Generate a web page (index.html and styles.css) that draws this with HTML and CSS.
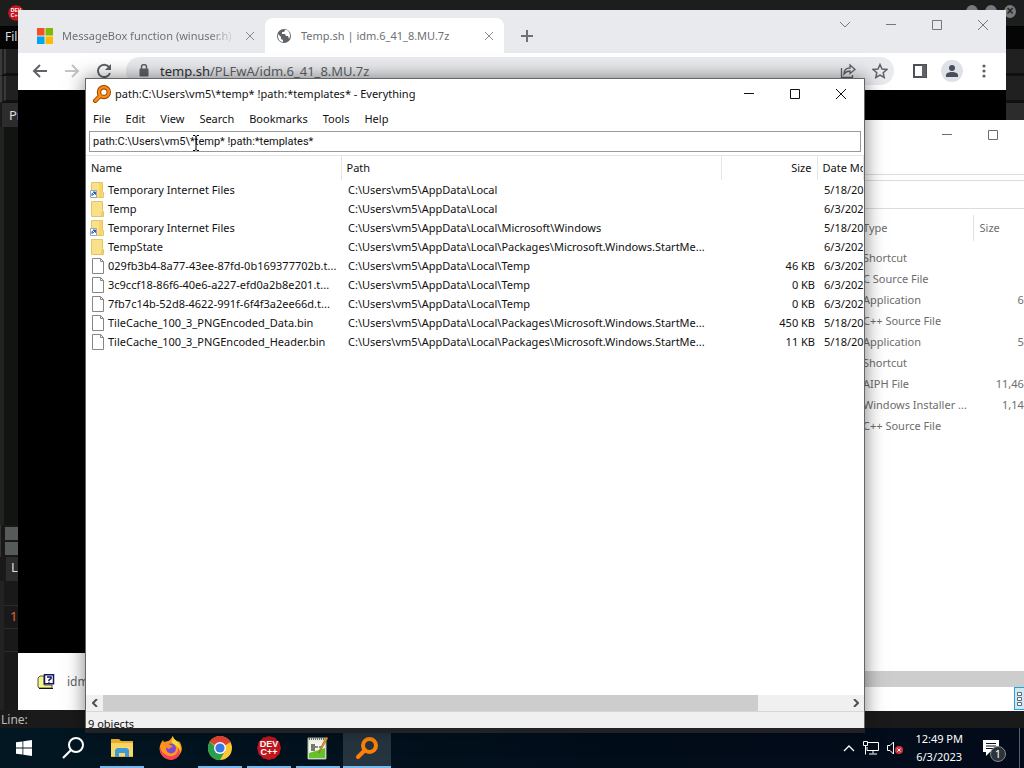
FILE: index.html
```html
<!DOCTYPE html>
<html lang="en">
<head>
  <meta charset="UTF-8">
  <meta name="viewport" content="width=device-width, initial-scale=1.0">
  <title>Desktop</title>
  <link rel="stylesheet" href="styles.css">
</head>
<body>
  <svg class="defs" width="0" height="0" aria-hidden="true">
    <symbol id="i-min" viewBox="0 0 10 10"><path d="M0 4.5h10" fill="none" stroke="currentColor"/></symbol>
    <symbol id="i-max" viewBox="0 0 10 10"><path d="M.5.5h9v9h-9z" fill="none" stroke="currentColor"/></symbol>
    <symbol id="i-close" viewBox="0 0 10 10"><path d="M0 0l10 10M10 0L0 10" fill="none" stroke="currentColor"/></symbol>
    <symbol id="i-folder" viewBox="0 0 16 16"><path d="M1.500.5h11v10h1v5h-12z" fill="#fbe08a" stroke="#e3c46a"/><path d="M11 11h2v4h-2z" fill="#f3cf63"/></symbol>
    <symbol id="i-link" viewBox="0 0 16 16"><path d="M1.500.5h11v10h1v5h-12z" fill="#fbe08a" stroke="#e3c46a"/><path d="M9 1h3v14H9z" fill="#f9d566"/><path d="M.5 8.500h6v7h-6z" fill="#fff" stroke="#9aa7b5"/><path d="M2 14v-2.500h1M3 10h2.500v2.500zM3 13l2-2" fill="#2a62b8" stroke="#2a62b8"/></symbol>
    <symbol id="i-file" viewBox="0 0 16 16"><path d="M2.500.5h8l3 3v12h-11z" fill="#fff" stroke="#868686"/><path d="M10.500.5v3h3" fill="none" stroke="#868686"/></symbol>
    <symbol id="i-everything" viewBox="0 0 24 24"><path d="M3 21l7-7" stroke-width="4" stroke-linecap="round" stroke="currentColor"/><circle cx="14.500" cy="9.500" r="6.500" fill="none" stroke="currentColor" stroke-width="4"/></symbol>
    <symbol id="i-dev" viewBox="0 0 24 24"><path d="M12 0l3 1 3 .5 2 2.500 2.500 2 .5 3 1 3-1 3-.5 3-2.500 2-2 2.500-3 .5-3 1-3-1-3-.5-2-2.500-2.500-2L1 15l-1-3 1-3 .5-3L4 4l2-2.500L9 1z" fill="#c4161c"/></symbol>
  </svg>

  <main class="desktop">
    <section class="window dev" aria-label="Dev-C++">
      <div class="dev-title">
        <span class="dev-logo"><svg width="16" height="16"><use href="#i-dev"/></svg><b>DEV<br>C++</b></span>
        <span class="dev-buttons"><i></i><i></i><i>×</i></span>
      </div>
      <div class="dev-menu"><a href="#">File</a></div>
      <div class="dev-tools"></div>
      <div class="dev-tools"></div>
      <div class="dev-tab">Project</div>
      <div class="dev-editor"></div>
      <div class="dev-blocks"><i></i><i></i></div>
      <div class="dev-tab dev-log">Line</div>
      <div class="dev-rows"><p>1</p><p></p><p></p></div>
      <footer class="dev-status">Line:</footer>
    </section>

    <section class="window chrome" aria-label="Chrome">
      <header class="tabs">
        <div class="tab">
          <svg width="16" height="16" viewBox="0 0 16 16"><path d="M0 0h7.500v7.500H0z" fill="#f25022"/><path d="M8.500 0H16v7.500H8.500z" fill="#7fba00"/><path d="M0 8.500h7.500V16H0z" fill="#00a4ef"/><path d="M8.500 8.500H16V16H8.500z" fill="#ffb900"/></svg>
          <span class="tab-name fade">MessageBox function (winuser.h)</span>
          <button class="tab-close" aria-label="Close tab"><svg width="8" height="8"><use href="#i-close"/></svg></button>
        </div>
        <div class="tab active">
          <svg width="16" height="16" viewBox="0 0 16 16"><circle cx="8" cy="8" r="7" fill="#5f6368"/><path d="M2 6l3 3v2l2 1v2C4 14 2 11 2 8zM9 2l-1 2H6v2h3l1 2h2l1 3c2-3 1-7-2-9z" fill="#fff"/></svg>
          <span class="tab-name">Temp.sh | idm.6_41_8.MU.7z</span>
          <button class="tab-close" aria-label="Close tab"><svg width="8" height="8"><use href="#i-close"/></svg></button>
        </div>
        <button class="new-tab" aria-label="New tab"><svg width="12" height="12" viewBox="0 0 12 12"><path d="M6 0v12M0 6h12" stroke="currentColor" stroke-width="2"/></svg></button>
        <div class="controls">
          <button aria-label="Search tabs"><svg width="12" height="12" viewBox="0 0 12 12"><path d="M1 3l5 5 5-5" fill="none" stroke="currentColor"/></svg></button>
          <button aria-label="Minimize"><svg width="10" height="10"><use href="#i-min"/></svg></button>
          <button aria-label="Maximize"><svg width="10" height="10"><use href="#i-max"/></svg></button>
          <button aria-label="Close"><svg width="10" height="10"><use href="#i-close"/></svg></button>
        </div>
      </header>
      <div class="toolbar">
        <button aria-label="Back"><svg width="16" height="16" viewBox="0 0 16 16"><path d="M15 8H2M8 2L2 8l6 6" fill="none" stroke="#5f6368" stroke-width="2"/></svg></button>
        <button aria-label="Forward"><svg width="16" height="16" viewBox="0 0 16 16"><path d="M1 8h13M8 2l6 6-6 6" fill="none" stroke="#c3c5c8" stroke-width="2"/></svg></button>
        <button aria-label="Reload"><svg width="16" height="16" viewBox="0 0 16 16"><path d="M13 4a6.200 6.200 0 1 0 1 6" fill="none" stroke="#5f6368" stroke-width="2"/><path d="M15 1v6H9z" fill="#5f6368"/></svg></button>
        <div class="address">
          <svg width="10" height="14" viewBox="0 0 10 14"><path d="M1 5h8v7H1z" fill="#5f6368" stroke="#5f6368"/><path d="M2.500 5V3a2.500 2.500 0 0 1 5 0v2" fill="none" stroke="#5f6368" stroke-width="1.500"/></svg>
          <span class="url"><b>temp.sh</b>/PLFwA/idm.6_41_8.MU.7z</span>
          <button aria-label="Share"><svg width="16" height="16" viewBox="0 0 16 16"><path d="M1.500 5v9.500h11V12M4 11c0-4 2-6 6-6V2l5 4.500-5 4V8c-3 0-4.500 1-6 3z" fill="none" stroke="#5f6368" stroke-width="1.300"/></svg></button>
          <button aria-label="Bookmark"><svg width="16" height="16" viewBox="0 0 16 16"><path d="M8 1.500l2 4.500 4.800.5-3.600 3.200 1 4.800L8 12l-4.200 2.500 1-4.800L1.200 6.500 6 6z" fill="none" stroke="#5f6368" stroke-width="1.500"/></svg></button>
        </div>
        <button aria-label="Side panel"><svg width="14" height="14" viewBox="0 0 14 14"><path d="M1 1h12v12H1z" fill="#fff" stroke="#4d5156" stroke-width="2"/><path d="M9 1h4v12H9z" fill="#5f6368"/></svg></button>
        <button class="profile" aria-label="Profile"><svg width="22" height="22" viewBox="0 0 22 22"><circle cx="11" cy="11" r="11" fill="#dfe1e8"/><circle cx="11" cy="8" r="3" fill="#484e5c"/><path d="M5 17v-2c0-4 12-4 12 0v2z" fill="#484e5c"/></svg></button>
        <button aria-label="Menu"><svg width="4" height="14" viewBox="0 0 4 14"><g fill="#5f6368"><circle cx="2" cy="2" r="1.600"/><circle cx="2" cy="7" r="1.600"/><circle cx="2" cy="12" r="1.600"/></g></svg></button>
      </div>
      <div class="page"></div>
      <footer class="downloads">
        <svg width="18" height="16" viewBox="0 0 18 16"><path d="M1 4l2-2h4v9h8v3H2l-1-1z" fill="#f3f58c" stroke="#55553c"/><path d="M2 14.500h14" stroke="#111"/><path d="M7.500.8h9v9h-9z" fill="#fff" stroke="#15155c" stroke-width="1.500"/><path d="M10 3h4v1.500L12 6v1M12 7.700v1" fill="none" stroke="#15155c" stroke-width="1.500"/></svg>
        <span>idm</span>
      </footer>
    </section>

    <section class="window explorer" aria-label="File Explorer">
      <header class="controls">
        <button aria-label="Minimize"><svg width="10" height="10"><use href="#i-min"/></svg></button>
        <button aria-label="Maximize"><svg width="10" height="10"><use href="#i-max"/></svg></button>
      </header>
      <div class="ex-address"></div>
      <table class="ex-files">
        <thead><tr><th>Type</th><th>Size</th></tr></thead>
        <tbody>
          <tr><td>Shortcut</td><td>2 KB</td></tr>
          <tr><td>C Source File</td><td>2 KB</td></tr>
          <tr><td>Application</td><td>65 KB</td></tr>
          <tr><td>C++ Source File</td><td></td></tr>
          <tr><td>Application</td><td>54 KB</td></tr>
          <tr><td>Shortcut</td><td>2 KB</td></tr>
          <tr><td>AIPH File</td><td>11,464 KB</td></tr>
          <tr><td>Windows Installer ...</td><td>1,140 KB</td></tr>
          <tr><td>C++ Source File</td><td></td></tr>
        </tbody>
      </table>
      <div class="ex-scroll"></div>
      <footer class="ex-status"><button aria-label="Details view"><svg width="8" height="14" viewBox="0 0 8 14"><path d="M2.500.5h4v3h-4zM2.500 5.500h4v3h-4zM2.500 10.500h4v3h-4z" fill="#fff" stroke="#667"/></svg></button></footer>
    </section>

    <section class="window everything" aria-label="Everything">
      <header class="ev-title">
        <svg class="ev-logo" width="18" height="18" viewBox="0 0 24 24"><path d="M3 21l7-7" stroke="#8a4300" stroke-width="6" stroke-linecap="round"/><circle cx="14.500" cy="9.500" r="6.500" fill="#fff" stroke="#8a4300" stroke-width="6"/><path d="M3 21l7-7" stroke="#ff8a10" stroke-width="3.500" stroke-linecap="round"/><circle cx="14.500" cy="9.500" r="6.500" fill="none" stroke="#ff8a10" stroke-width="3.500"/></svg>
        <h1>path:C:\Users\vm5\*temp* !path:*templates* - Everything</h1>
        <div class="controls">
          <button aria-label="Minimize"><svg width="10" height="10"><use href="#i-min"/></svg></button>
          <button aria-label="Maximize"><svg width="10" height="10"><use href="#i-max"/></svg></button>
          <button aria-label="Close"><svg width="10" height="10"><use href="#i-close"/></svg></button>
        </div>
      </header>
      <nav class="ev-menu">
        <a href="#">File</a><a href="#">Edit</a><a href="#">View</a><a href="#">Search</a><a href="#">Bookmarks</a><a href="#">Tools</a><a href="#">Help</a>
      </nav>
      <div class="ev-search">
        <input type="text" aria-label="Search" value="path:C:\Users\vm5\*temp* !path:*templates*">
        <svg class="caret" width="8" height="16" viewBox="0 0 8 16"><path d="M1 .5h2l1 1 1-1h2M4 1v14M1 15.500h2l1-1 1 1h2" fill="none" stroke="#000"/></svg>
      </div>
      <div class="ev-list">
        <table>
          <colgroup><col class="c-name"><col class="c-path"><col class="c-size"><col></colgroup>
          <thead><tr><th>Name</th><th>Path</th><th>Size</th><th>Date Modified</th></tr></thead>
          <tbody>
            <tr><td><svg width="16" height="16"><use href="#i-link"/></svg>Temporary Internet Files</td><td>C:\Users\vm5\AppData\Local</td><td></td><td>5/18/2023</td></tr>
            <tr><td><svg width="16" height="16"><use href="#i-folder"/></svg>Temp</td><td>C:\Users\vm5\AppData\Local</td><td></td><td>6/3/2023</td></tr>
            <tr><td><svg width="16" height="16"><use href="#i-link"/></svg>Temporary Internet Files</td><td>C:\Users\vm5\AppData\Local\Microsoft\Windows</td><td></td><td>5/18/2023</td></tr>
            <tr><td><svg width="16" height="16"><use href="#i-folder"/></svg>TempState</td><td>C:\Users\vm5\AppData\Local\Packages\Microsoft.Windows.StartMe...</td><td></td><td>6/3/2023</td></tr>
            <tr><td><svg width="16" height="16"><use href="#i-file"/></svg>029fb3b4-8a77-43ee-87fd-0b169377702b.t...</td><td>C:\Users\vm5\AppData\Local\Temp</td><td>46 KB</td><td>6/3/2023</td></tr>
            <tr><td><svg width="16" height="16"><use href="#i-file"/></svg>3c9ccf18-86f6-40e6-a227-efd0a2b8e201.t...</td><td>C:\Users\vm5\AppData\Local\Temp</td><td>0 KB</td><td>6/3/2023</td></tr>
            <tr><td><svg width="16" height="16"><use href="#i-file"/></svg>7fb7c14b-52d8-4622-991f-6f4f3a2ee66d.t...</td><td>C:\Users\vm5\AppData\Local\Temp</td><td>0 KB</td><td>6/3/2023</td></tr>
            <tr><td><svg width="16" height="16"><use href="#i-file"/></svg>TileCache_100_3_PNGEncoded_Data.bin</td><td>C:\Users\vm5\AppData\Local\Packages\Microsoft.Windows.StartMe...</td><td>450 KB</td><td>5/18/2023</td></tr>
            <tr><td><svg width="16" height="16"><use href="#i-file"/></svg>TileCache_100_3_PNGEncoded_Header.bin</td><td>C:\Users\vm5\AppData\Local\Packages\Microsoft.Windows.StartMe...</td><td>11 KB</td><td>5/18/2023</td></tr>
          </tbody>
        </table>
      </div>
      <div class="ev-scroll">
        <button aria-label="Scroll left"><svg width="6" height="8" viewBox="0 0 6 8"><path d="M5 0L1 4l4 4" fill="none" stroke="#505050" stroke-width="2"/></svg></button>
        <div class="track"><div class="thumb"></div></div>
        <button aria-label="Scroll right"><svg width="6" height="8" viewBox="0 0 6 8"><path d="M1 0l4 4-4 4" fill="none" stroke="#505050" stroke-width="2"/></svg></button>
      </div>
      <footer class="ev-status">9 objects</footer>
    </section>
  </main>

  <nav class="taskbar" aria-label="Taskbar">
    <button class="task" aria-label="Start"><svg width="16" height="16" viewBox="0 0 16 16"><path d="M0 2.300L6.500 1.400v6.100H0zM7.300 1.300L16 0v7.500H7.300zM0 8.400h6.500v6.200L0 13.700zM7.300 8.400H16V16l-8.700-1.300z" fill="#fff"/></svg></button>
    <button class="task" aria-label="Search"><svg width="22" height="22" viewBox="0 0 22 22"><circle cx="14" cy="8" r="7" fill="none" stroke="#fff" stroke-width="2"/><path d="M9 13l-8 8" stroke="#fff" stroke-width="2.200"/></svg></button>
    <button class="task open" aria-label="File Explorer"><svg width="22" height="20" viewBox="0 0 22 20"><path d="M0 1h8l2 2h12v16H0z" fill="#f0b429"/><path d="M0 5h22v13H0z" fill="#fbd867"/><path d="M4 19v-7l2-2h10l2 2v7h-4v-4H8v4z" fill="#3f9bd8"/></svg></button>
    <button class="task" aria-label="Firefox"><svg width="24" height="24" viewBox="0 0 24 24"><path d="M2 7l2-3 1 2 4-1c2 0 3-3 5-5 0 3 3 4 5 6l1-1c3 4 4 9 1 13-4 7-14 7-18 1C0 15 0 11 2 7z" fill="#ff9a1f"/><path d="M1 11c1 3 3 8 9 9 7 1 10-4 9-9 4 5 1 12-6 13C5 24 0 18 1 11z" fill="#fb3f55"/><path d="M14 0c0 3 3 4 5 6 2 3 3 6 2 9-1-4-4-6-7-7-2-2-1-6 0-8z" fill="#ffdf38"/><circle cx="12" cy="12.500" r="5" fill="#7a4bd8"/><path d="M4 7c3-1 5 0 7 2l3 1c-1 2-3 1-4 3-3-1-5-3-6-6z" fill="#ff8d22"/></svg></button>
    <button class="task open" aria-label="Chrome"><svg width="24" height="24" viewBox="0 0 24 24"><circle cx="12" cy="12" r="12" fill="#fcc934"/><path d="M12 12L1.600 6A12 12 0 0 1 22.400 6z" fill="#ea4335"/><path d="M12 6h10.400L12 12z" fill="#ea4335"/><path d="M1.600 6A12 12 0 0 0 12 24l5-9-5-1z" fill="#28a04c"/><circle cx="12" cy="12" r="6" fill="#fff"/><circle cx="12" cy="12" r="4.600" fill="#3b78e7"/></svg></button>
    <button class="task open" aria-label="Dev-C++"><span class="dev-logo big"><svg width="24" height="24"><use href="#i-dev"/></svg><b>DEV<br>C++</b></span></button>
    <button class="task open" aria-label="Notepad++"><svg width="22" height="24" viewBox="0 0 22 24"><path d="M1 2h18v21H1z" fill="#f7faf0" stroke="#a9b59c"/><path d="M2 17l16-5v10H2z" fill="#65c22c"/><path d="M2 3h16" stroke="#777" stroke-width="2" stroke-dasharray="1 1"/><path d="M5 8v7M7 8v7M8 11h3M12 11h3" stroke="#222" stroke-width="1.200"/><path d="M21 2l-7 12-2 3 1-4 6-12z" fill="#f0a02c" stroke="#9a5b16" stroke-width=".6"/></svg></button>
    <button class="task open current" aria-label="Everything"><svg width="24" height="24"><use href="#i-everything"/></svg></button>
    <div class="tray">
      <svg width="12" height="8" viewBox="0 0 12 8"><path d="M1 7l5-5 5 5" fill="none" stroke="#fff" stroke-width="1.300"/></svg>
      <svg width="16" height="14" viewBox="0 0 16 14"><path d="M5 1.500h10.500v8H4V6M.5.5h4v4h-4zM2.500 4.500v9M10 9.500v3M6 13h8" fill="none" stroke="#fff"/></svg>
      <svg width="16" height="14" viewBox="0 0 16 14"><path d="M.5 4.500H3L6.500 1v12L3 9.500H.5z" fill="none" stroke="#fff"/><circle cx="12" cy="9" r="4" fill="#d13438"/><path d="M10.500 7.500l3 3M13.500 7.500l-3 3" stroke="#fff"/></svg>
      <div class="clock"><span>12:49 PM</span><span>6/3/2023</span></div>
      <div class="notes"><svg width="16" height="16" viewBox="0 0 16 16"><path d="M0 0h16v12H7l-4 4v-4H0z" fill="#fff"/><path d="M3 3.500h10M3 6h10M3 8.500h7" stroke="#06121d"/></svg><span class="badge">1</span></div>
      <button class="show-desktop" aria-label="Show desktop"></button>
    </div>
  </nav>
</body>
</html>
```
FILE: styles.css
```css
* {
  box-sizing: border-box;
}
body {
  margin: 0;
  height: 100vh;
  display: flex;
  flex-direction: column;
  overflow: hidden;
  background: #000;
  color: #111;
  font: 11px/16px "Noto Sans", "Open Sans", sans-serif;
}
button {
  display: flex;
  align-items: center;
  justify-content: center;
  padding: 0;
  border: 0;
  background: none;
  color: inherit;
  font: inherit;
}
svg {
  display: block;
  flex: none;
}
a {
  color: inherit;
  text-decoration: none;
}
.defs {
  position: absolute;
}
.desktop {
  position: relative;
  z-index: 1;
  flex: 1;
}
.window {
  position: absolute;
  display: flex;
  flex-direction: column;
}
.controls {
  display: flex;
  margin-left: auto;
}
.controls button {
  width: 46px;
  height: 29px;
}

/* Dev-C++ */
.dev {
  inset: 0;
  background: #191919;
  color: #ddd;
  font-size: 12px;
}
.dev-title {
  height: 27px;
  flex: none;
  display: flex;
  justify-content: space-between;
  padding: 5px 8px;
  background: #1c1e1e;
  border-bottom: 1px solid #000;
}
.dev-logo {
  display: grid;
  place-items: center;
  width: 16px;
  height: 16px;
}
.dev-logo svg,
.dev-logo b {
  grid-area: 1 / 1;
}
.dev-logo b {
  color: #fff;
  font: bold 5px/5px "Liberation Sans", sans-serif;
}
.dev-logo.big b {
  font-size: 9px;
  line-height: 8px;
}
.dev-logo.big {
  width: 24px;
  height: 24px;
}
.dev-buttons {
  display: flex;
  gap: 7px;
}
.dev-buttons i {
  width: 12px;
  height: 13px;
  border-radius: 50%;
  background: #77797a;
  color: #222;
  font: bold 12px/13px "Liberation Sans", sans-serif;
  text-align: center;
}
.dev-menu {
  height: 22px;
  flex: none;
  padding: 2px 5px;
  background: #050505;
}
.dev-tools {
  height: 27px;
  flex: none;
  background: #202020;
  border-bottom: 3px solid #101010;
  border-left: 6px double #3a3a3a;
}
.dev-tab {
  height: 24px;
  flex: none;
  margin-left: 2px;
  padding: 4px 7px;
  background: #2c2c2c;
  font-size: 13px;
}
.dev-editor {
  flex: 1;
  border-left: 4px solid #222;
  background: #121412;
}
.dev-blocks {
  height: 32px;
  flex: none;
  display: grid;
  gap: 2px;
  padding: 2px 4px;
  border-left: 1px solid #333;
}
.dev-blocks i {
  background: #565a58;
}
.dev-log {
  margin-left: 6px;
  padding: 2px 5px;
}
.dev-rows {
  height: 129px;
  flex: none;
  padding-top: 24px;
  border-left: 4px solid #222;
}
.dev-rows p {
  height: 23px;
  margin: 0;
  padding: 2px 6px;
  border-top: 1px solid #2c2c2c;
  color: #e0643c;
  font-size: 13px;
}
.dev-status {
  height: 18px;
  flex: none;
  padding: 2px 1px 0;
  background: #1a1a1a;
  color: #bbb;
}

/* Chrome */
.chrome {
  inset: 10px 18px 18px;
  background: #fff;
  color: #5f6368;
}
.tabs {
  display: flex;
  height: 43px;
  flex: none;
  padding-left: 8px;
  background: #e8eaed;
  color: #6d7075;
}
.tab {
  display: flex;
  align-items: center;
  width: 239px;
  height: 35px;
  margin-top: 8px;
  padding: 0 8px 0 11px;
  border-radius: 8px 8px 0 0;
}
.tab.active {
  background: #fff;
}
.tab-name {
  flex: 1;
  margin-left: 9px;
  overflow: hidden;
  white-space: nowrap;
}
.fade {
  -webkit-mask-image: linear-gradient(90deg, #000 85%, transparent);
  mask-image: linear-gradient(90deg, #000 85%, transparent);
}
.tab-close {
  width: 14px;
  height: 14px;
  margin-left: 7px;
}
.new-tab {
  width: 28px;
  margin: 8px 0 0 9px;
}
.tabs .controls {
  color: #777;
}
.toolbar {
  display: flex;
  align-items: center;
  gap: 4px;
  height: 37px;
  flex: none;
  padding: 0 8px 2px;
}
.toolbar button {
  width: 28px;
  height: 28px;
}
.address {
  flex: 1;
  display: flex;
  align-items: center;
  gap: 4px;
  height: 28px;
  margin: 0 8px 0 4px;
  padding-left: 13px;
  border-radius: 14px;
  background: #e8eaed;
}
.url {
  flex: 1;
  margin-left: 7px;
  font-size: 13px;
}
.url b {
  color: #303134;
  font-weight: normal;
}
.page {
  flex: 1;
  background: #000;
}
.downloads {
  display: flex;
  align-items: center;
  gap: 12px;
  height: 57px;
  flex: none;
  padding-left: 19px;
  font-size: 12px;
}

/* File Explorer */
.explorer {
  inset: 120px 0 17px 500px;
  overflow: hidden;
  background: #fff;
  color: #6d6d6d;
}
.explorer > .controls {
  height: 54px;
  flex: none;
  margin-right: 8px;
}
.ex-address {
  height: 35px;
  flex: none;
  border: 1px solid #dcdcdc;
  border-width: 1px 0;
  box-shadow: inset 0 5px #fff, inset 0 6px #dcdcdc;
}
.ex-files {
  width: 196px;
  margin: 6px 0 0 357px;
  border-collapse: collapse;
  table-layout: fixed;
}
.ex-files th,
.ex-files td {
  height: 21px;
  padding: 0 6px;
  font-weight: normal;
  text-align: left;
  white-space: nowrap;
}
.ex-files th {
  height: 26px;
}
.ex-files th:first-child {
  width: 116px;
}
.ex-files th:last-child {
  border-left: 1px solid #e2e2e2;
}
.ex-files thead::after {
  content: "";
  display: block;
  height: 6px;
}
.ex-files td:last-child {
  text-align: right;
}
.ex-scroll {
  height: 16px;
  flex: none;
  margin-top: auto;
  background: #cdcdcd;
}
.ex-status {
  display: flex;
  justify-content: flex-end;
  height: 24px;
  flex: none;
}
.ex-status button {
  width: 10px;
  height: 23px;
  justify-content: flex-start;
  border: 1px solid #26a0da;
  border-right: 0;
  background: #cce8f4;
}

/* Everything */
.everything {
  inset: 78px 159px 0 85px;
  border: 1px solid #666;
  border-bottom: 0;
  background: #fff;
  box-shadow: 0 5px #202224, 0 0 18px rgba(0, 0, 0, .5);
}
.ev-title {
  display: flex;
  align-items: center;
  height: 29px;
  flex: none;
  padding-left: 7px;
}
.ev-title h1 {
  margin: 0 0 0 4px;
  font-size: 11px;
  font-weight: normal;
}
.ev-menu {
  display: flex;
  gap: 1px;
  height: 23px;
  flex: none;
  padding: 3px 0;
}
.ev-menu a {
  padding: 0 7px;
}
.ev-search {
  position: relative;
  padding: 0 3px 3px;
  border-bottom: 1px solid #e5e5e5;
}
.ev-search input {
  display: block;
  width: 100%;
  height: 21px;
  padding: 0 3px;
  border: 1px solid #999;
  color: #111;
  font: 11px Roboto, sans-serif;
}
.caret {
  position: absolute;
  left: 106px;
  top: 4px;
}
.ev-list {
  flex: 1;
  overflow: hidden;
}
.ev-list table {
  width: 100%;
  border-collapse: collapse;
  table-layout: fixed;
}
.c-name {
  width: 255px;
}
.c-path {
  width: 380px;
}
.c-size {
  width: 96px;
}
.ev-list th {
  height: 24px;
  padding: 0 5px;
  border-right: 1px solid #e5e5e5;
  font-weight: normal;
  text-align: left;
  white-space: nowrap;
  overflow: hidden;
}
.ev-list td {
  height: 19px;
  padding: 0 2px 0 7px;
  white-space: nowrap;
  overflow: hidden;
}
.ev-list td:first-child {
  padding-left: 4px;
}
.ev-list td svg {
  float: left;
  margin-right: 2px;
}
.ev-list th:nth-child(3),
.ev-list td:nth-child(3) {
  text-align: right;
}
.ev-scroll {
  display: flex;
  height: 16px;
  flex: none;
  background: #f0f0f0;
}
.ev-scroll button {
  width: 17px;
}
.track {
  flex: 1;
}
.thumb {
  width: 88%;
  height: 100%;
  background: #cdcdcd;
}
.ev-status {
  height: 17px;
  flex: none;
  padding: 4px 2px 0;
  overflow: hidden;
  border-top: 1px solid #d7d7d7;
  background: #f0f0f0;
}

/* Taskbar */
.taskbar {
  display: flex;
  height: 40px;
  flex: none;
  background: linear-gradient(90deg, #021722, #020d1a 60%, #030b1a);
  color: #fff;
}
.task {
  width: 48px;
  margin-right: 1px;
  padding-top: 2px;
  border-bottom: 2px solid transparent;
}
.task.open {
  border-image: linear-gradient(90deg, transparent 4px, #76b9ed 4px, #76b9ed 44px, transparent 44px) 2;
}
.task.current {
  border-image: none;
  border-color: #76b9ed;
  background: #25343f;
  color: #ff8008;
}
.tray {
  display: flex;
  align-items: center;
  gap: 8px;
  margin-left: auto;
}
.clock {
  display: grid;
  margin: 0 12px 0 4px;
  line-height: 18px;
  text-align: center;
}
.notes {
  position: relative;
}
.badge {
  position: absolute;
  left: 7px;
  top: 6px;
  width: 16px;
  height: 16px;
  border: 1px solid #888;
  border-radius: 50%;
  background: #2b333b;
  line-height: 14px;
  text-align: center;
}
.show-desktop {
  width: 5px;
  height: 40px;
  margin-left: 12px;
  border-left: 1px solid #59616a;
}
```
